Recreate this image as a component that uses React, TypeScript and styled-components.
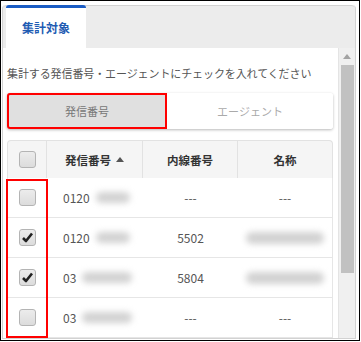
import React from 'react';
import styled, { createGlobalStyle } from 'styled-components';

const Global = createGlobalStyle`
  html, body { margin: 0; padding: 0; background: #fff; }
  body { font-family: "Noto Sans CJK JP", "Noto Sans", sans-serif; }
  * { box-sizing: border-box; }
`;

const Frame = styled.div`
  width: 360px;
  height: 341px;
  border: 1px solid #000;
  padding: 4px 3px 1px 1px;
  display: flex;
  background: #fff;
`;

const Panel = styled.div`
  flex: 1;
  display: flex;
  flex-direction: column;
  border: 1px solid #d2d2d2;
  border-top: none;
  border-radius: 4px 4px 0 0;
  overflow: hidden;
  background: #fff;
`;

const TabBar = styled.div`
  height: 43px;
  flex: none;
  display: flex;
  padding-left: 3px;
  background: #ececec;
  border-top: 1px solid #d2d2d2;
  border-radius: 4px 4px 0 0;
`;

const Tab = styled.div<{ $active?: boolean }>`
  width: 80px;
  height: 43px;
  margin-top: -1px;
  display: flex;
  align-items: center;
  justify-content: center;
  border-top: 3px solid ${(p) => (p.$active ? '#1a5cc4' : 'transparent')};
  border-radius: 3px 3px 0 0;
  background: ${(p) => (p.$active ? '#fff' : 'transparent')};
  color: #1f5cb3;
  font-weight: bold;
  font-size: 12px;
  padding-bottom: 2px;
`;

const Body = styled.div`
  flex: 1;
  min-height: 0;
  display: flex;
`;

const Scroller = styled.div`
  flex: 1;
  min-width: 0;
  overflow: hidden;
  padding: 16px 5px 0 4px;
`;

const Scrollbar = styled.div`
  width: 17px;
  flex: none;
  display: flex;
  flex-direction: column;
  align-items: center;
  background: #f0f0f0;
  border-left: 1px solid #e4e4e4;
`;

const ArrowBox = styled.div`
  height: 17px;
  width: 100%;
  display: flex;
  align-items: center;
  justify-content: center;
`;

const Thumb = styled.div`
  width: 13px;
  height: 208px;
  background: #c1c1c1;
`;

const Instruction = styled.div`
  font-size: 11px;
  line-height: 18px;
  color: #555;
  white-space: nowrap;
  letter-spacing: -0.1px;
`;

const Toggle = styled.div`
  margin-top: 11px;
  height: 36px;
  display: grid;
  grid-template-columns: 160px 1fr;
  border-radius: 3px;
  box-shadow: 0 1px 3px rgba(0, 0, 0, 0.28);
  background: #fff;
`;

const ToggleButton = styled.div<{ $selected?: boolean; $marked?: boolean }>`
  display: flex;
  align-items: center;
  justify-content: center;
  font-size: 11px;
  color: ${(p) => (p.$selected ? '#777' : '#aaa')};
  background: ${(p) => (p.$selected ? '#e0e0e0' : '#fff')};
  border-radius: ${(p) => (p.$selected ? '3px 0 0 3px' : '0 3px 3px 0')};
  outline: ${(p) => (p.$marked ? '2px solid #f00' : 'none')};
  outline-offset: -2px;
`;

const Table = styled.div`
  margin-top: 11px;
  width: 326px;
`;

const HeaderRow = styled.div`
  height: 38px;
  display: grid;
  grid-template-columns: 39px 96px 95px 1fr;
  background: #f5f5f5;
  border: 1px solid #e2e2e2;
  border-bottom: none;
  border-radius: 4px 4px 0 0;
`;

const HeadCell = styled.div`
  display: flex;
  align-items: center;
  justify-content: center;
  gap: 5px;
  font-size: 11.5px;
  font-weight: bold;
  color: #333;
  border-right: 1px solid #e2e2e2;
  &:last-child { border-right: none; }
`;

const Rows = styled.div`
  position: relative;
`;

const Row = styled.div`
  height: 40px;
  display: grid;
  grid-template-columns: 39px 96px 95px 1fr;
  border: 1px solid #e6e6e6;
  border-top: none;
  background: #fff;
`;

const Cell = styled.div<{ $align?: 'left' | 'center' }>`
  display: flex;
  align-items: center;
  justify-content: ${(p) => (p.$align === 'left' ? 'flex-start' : 'center')};
  padding-left: ${(p) => (p.$align === 'left' ? '16px' : '0')};
  font-size: 12px;
  color: #555;
  gap: 6px;
`;

const Redacted = styled.span<{ $w: number; $h?: number }>`
  display: inline-block;
  width: ${(p) => p.$w}px;
  height: ${(p) => p.$h ?? 11}px;
  background: #d2d2d2;
  border-radius: 6px;
  filter: blur(3px);
`;

const Box = styled.div`
  width: 17px;
  height: 17px;
  border: 1px solid #b4b4b4;
  border-radius: 3px;
  background: linear-gradient(#ececec, #dcdcdc);
  display: flex;
  align-items: center;
  justify-content: center;
`;

const ColumnMark = styled.div`
  position: absolute;
  left: -1px;
  top: 1px;
  width: 42px;
  height: 159px;
  border: 2px solid #f00;
  pointer-events: none;
`;

const Check = ({ checked }: { checked?: boolean }) => (
  <Box>
    {checked && (
      <svg width="13" height="13" viewBox="0 0 13 13">
        <path d="M2 7 L5 10 L11 2.5" fill="none" stroke="#222" strokeWidth="2.6" strokeLinejoin="round" />
      </svg>
    )}
  </Box>
);

type RowData = { checked: boolean; prefix: string; blurW: number; ext: string; name: boolean };

const rows: RowData[] = [
  { checked: false, prefix: '0120', blurW: 34, ext: '---', name: false },
  { checked: true, prefix: '0120', blurW: 34, ext: '5502', name: true },
  { checked: true, prefix: '03', blurW: 50, ext: '5804', name: true },
  { checked: false, prefix: '03', blurW: 50, ext: '---', name: false },
];

export default function App() {
  return (
    <>
      <Global />
      <Frame>
        <Panel>
          <TabBar>
            <Tab $active>集計対象</Tab>
          </TabBar>
          <Body>
            <Scroller>
              <Instruction>集計する発信番号・エージェントにチェックを入れてください</Instruction>
              <Toggle>
                <ToggleButton $selected $marked>発信番号</ToggleButton>
                <ToggleButton>エージェント</ToggleButton>
              </Toggle>
              <Table>
                <HeaderRow>
                  <HeadCell>
                    <Check />
                  </HeadCell>
                  <HeadCell>
                    発信番号
                    <svg width="8" height="5" viewBox="0 0 8 5">
                      <path d="M0 5 L4 0 L8 5 Z" fill="#555" />
                    </svg>
                  </HeadCell>
                  <HeadCell>内線番号</HeadCell>
                  <HeadCell>名称</HeadCell>
                </HeaderRow>
                <Rows>
                  {rows.map((r, i) => (
                    <Row key={i}>
                      <Cell>
                        <Check checked={r.checked} />
                      </Cell>
                      <Cell $align="left">
                        {r.prefix}
                        <Redacted $w={r.blurW} />
                      </Cell>
                      <Cell>{r.ext}</Cell>
                      <Cell>{r.name ? <Redacted $w={78} $h={12} /> : '---'}</Cell>
                    </Row>
                  ))}
                  <ColumnMark />
                </Rows>
              </Table>
            </Scroller>
            <Scrollbar>
              <ArrowBox>
                <svg width="8" height="5" viewBox="0 0 8 5">
                  <path d="M0 5 L4 0 L8 5 Z" fill="#a3a3a3" />
                </svg>
              </ArrowBox>
              <Thumb />
            </Scrollbar>
          </Body>
        </Panel>
      </Frame>
    </>
  );
}
